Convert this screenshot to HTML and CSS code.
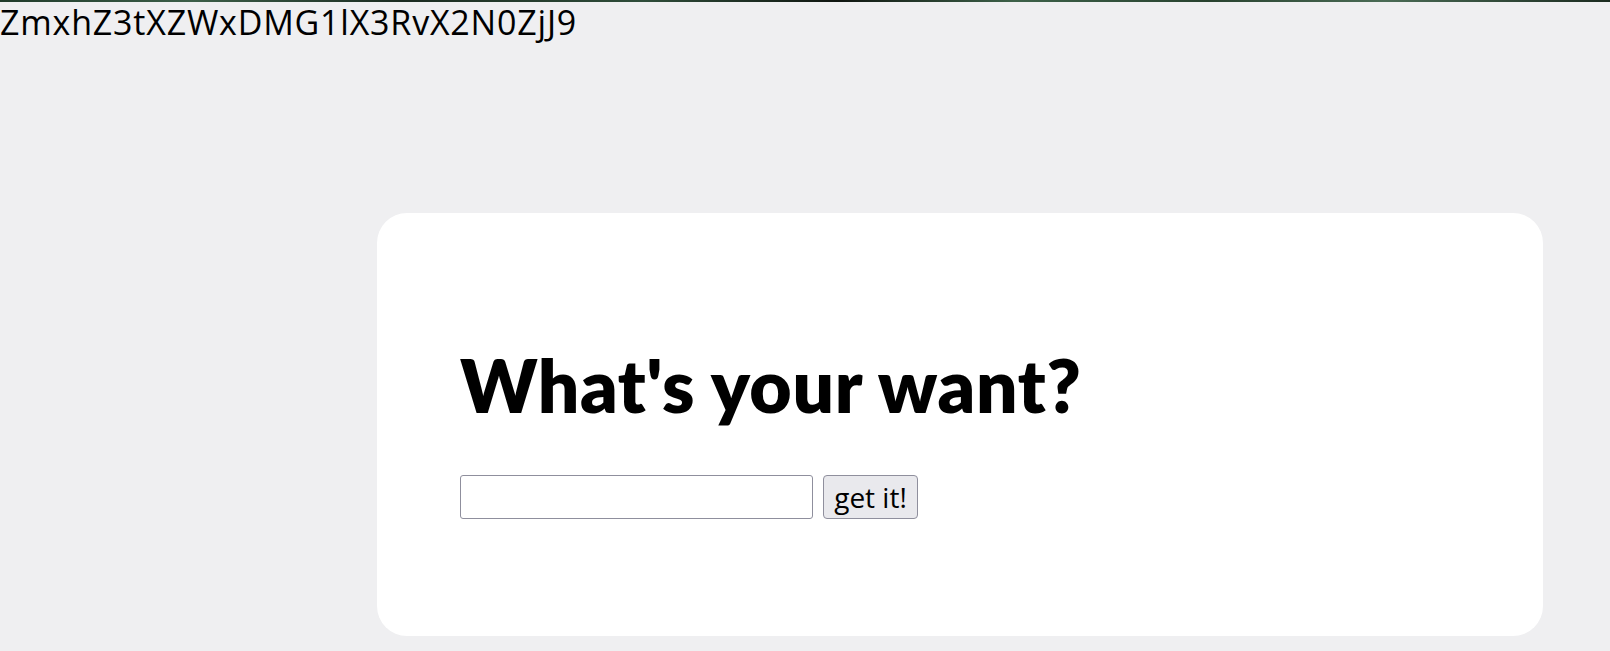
FILE: index.html
```html
<!DOCTYPE html>
<html lang="en">
<head>
<meta charset="utf-8">
<title>What's your want?</title>
<link rel="stylesheet" href="styles.css">
</head>
<body>
<div class="strip"></div>
<div class="flag">ZmxhZ3tXZWxDMG1lX3RvX2N0ZjJ9</div>
<main class="card">
  <h1 class="title">What's your want?</h1>
  <form class="form">
    <input class="field" type="text">
    <button class="btn" type="button">get it!</button>
  </form>
</main>
</body>
</html>
```
FILE: styles.css
```css
html, body {
  margin: 0;
  padding: 0;
}
body {
  background: #efeff1;
  font-family: "Open Sans", "Noto Sans", sans-serif;
  color: #000;
}
.strip {
  height: 2px;
  background: linear-gradient(90deg, #1f3a2a 0%, #3c5e48 12%, #1a2a20 25%, #2f4d3a 40%, #0f1510 52%, #3d6149 63%, #28422f 75%, #4a6b55 86%, #1b2b20 100%);
}
.flag {
  font-size: 34px;
  line-height: 45px;
  letter-spacing: 0.8px;
  margin-top: -2px;
}
.card {
  margin: 168px 0 0 377px;
  width: 1166px;
  box-sizing: border-box;
  background: #fff;
  border-radius: 30px;
  padding: 132px 82px 117px 83px;
}
.title {
  margin: 0;
  font-family: Lato, "Open Sans", sans-serif;
  font-size: 73px;
  line-height: 80px;
  font-weight: 800;
  letter-spacing: 0.65px;
}
.form {
  margin: 50px 0 0;
  display: flex;
  gap: 10px;
}
.field {
  width: 353px;
  height: 44px;
  box-sizing: border-box;
  border: 1px solid #8f8f9d;
  border-radius: 3px;
  background: #fff;
  margin: 0;
  font-size: 24px;
}
.btn {
  width: 95px;
  height: 44px;
  box-sizing: border-box;
  border: 1px solid #8f8f9d;
  border-radius: 4px;
  background: #e9e9ed;
  font-family: "Open Sans", "Noto Sans", sans-serif;
  font-size: 28px;
  line-height: 1;
  color: #000;
  padding: 0;
  margin: 0;
}
```
